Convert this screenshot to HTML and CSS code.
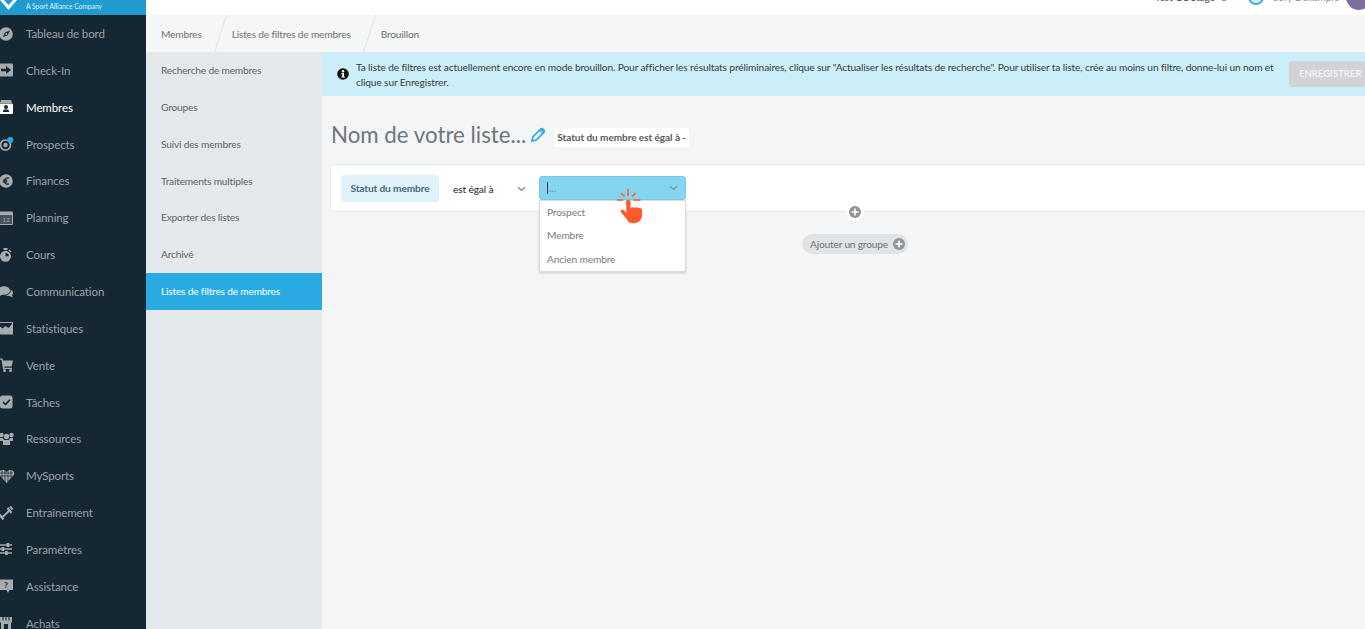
FILE: index.html
```html
<!DOCTYPE html>
<html lang="fr">
<head>
<meta charset="utf-8">
<title>Brouillon</title>
<link rel="stylesheet" href="styles.css">
</head>
<body>
<div class="app">
  <aside class="sidebar">
    <div class="logo">
      <svg class="logo-mark" viewBox="0 0 17 11" width="17" height="11"><path d="M0 0 L8.500 10 L17 0 L13 0 L8.500 5 L4 0 Z" fill="#fff"/></svg>
      <span class="logo-text">A Sport Alliance Company</span>
    </div>
    <nav class="nav">
      <a class="nav-item"><svg class="ico" viewBox="0 0 13 14"><circle cx="6" cy="7" r="6.800" fill="#a5abaf"/><path d="M10 3.500L7.500 8.500 3 10l2-4.500z" fill="#152732"/><circle cx="6.300" cy="7" r="1" fill="#a5abaf"/></svg><span>Tableau de bord</span></a>
      <a class="nav-item"><svg class="ico" viewBox="0 0 13 14"><rect x="-1" y="0.500" width="14" height="13" rx="1" fill="#a5abaf"/><path d="M1 5.800h5V3l5 4-5 4V8.200H1z" fill="#152732"/></svg><span>Check-In</span></a>
      <a class="nav-item active"><svg class="ico" viewBox="0 0 13 14"><path d="M1 0h10l1 3H0z" fill="#a5abaf"/><rect x="-1" y="3.500" width="14" height="10.500" rx="1" fill="#fff"/><circle cx="6" cy="7" r="2" fill="#152732"/><path d="M2.800 12c0-2.200 1.500-2.800 3.200-2.800S9.200 9.800 9.200 12z" fill="#152732"/></svg><span>Membres</span></a>
      <a class="nav-item"><svg class="ico" viewBox="0 0 13 14"><circle cx="5.500" cy="8" r="5" fill="none" stroke="#a5abaf" stroke-width="1.700"/><circle cx="5.500" cy="8" r="2.200" fill="#a5abaf"/><circle cx="10.300" cy="3" r="3" fill="#29abe2"/></svg><span>Prospects</span></a>
      <a class="nav-item"><svg class="ico" viewBox="0 0 13 14"><circle cx="6" cy="7" r="6.800" fill="#a5abaf"/><path d="M9 4.300C6.700 3 4.500 4.500 4.500 7s2.200 4 4.500 2.700M2.800 6.200h4.500M2.800 7.900h4.500" fill="none" stroke="#152732" stroke-width="1.200"/></svg><span>Finances</span></a>
      <a class="nav-item"><svg class="ico" viewBox="0 0 13 14"><rect x="-1" y="0.500" width="14" height="13.500" rx="1" fill="#a5abaf"/><rect x="0" y="4" width="12" height="9" fill="#46535b"/><text x="6" y="11" class="ico-num">12</text></svg><span>Planning</span></a>
      <a class="nav-item"><svg class="ico" viewBox="0 0 13 14"><circle cx="5.500" cy="8.300" r="5.500" fill="#a5abaf"/><rect x="3.500" y="0" width="4" height="2" fill="#a5abaf"/><path d="M9.500 1.500l2 2-1 1-2-2z" fill="#a5abaf"/><path d="M5.500 8.300V5A3.300 3.300 0 0 1 8.800 8.300z" fill="#152732"/></svg><span>Cours</span></a>
      <a class="nav-item"><svg class="ico" viewBox="0 0 13 14"><ellipse cx="4" cy="5.500" rx="6" ry="4.300" fill="#a5abaf"/><path d="M0 8l-1 3.500L3.500 9z" fill="#a5abaf"/><path d="M10.500 4.500c1.500.8 2.500 2 2.500 3.500 0 1-.5 1.800-1 2.300l1 2.200-3.500-1.500c-1.500.2-3-.2-4-1 3 0 6-2 5-5.500z" fill="#a5abaf"/></svg><span>Communication</span></a>
      <a class="nav-item"><svg class="ico" viewBox="0 0 13 14"><rect x="-1" y="1" width="14" height="12.500" fill="#a5abaf"/><path d="M0 2h12v1L8.500 7 5.500 5 2.500 7.500 0 5.500z" fill="#152732"/></svg><span>Statistiques</span></a>
      <a class="nav-item"><svg class="ico" viewBox="0 0 13 14"><path d="M-1 .5h3.500l.5 2H13L11.500 8.500H4.200l.3 1.200H12v1.300H3L1.500 1.800H-1z" fill="#a5abaf"/><circle cx="4.500" cy="12.500" r="1.500" fill="#a5abaf"/><circle cx="10.500" cy="12.500" r="1.500" fill="#a5abaf"/></svg><span>Vente</span></a>
      <a class="nav-item"><svg class="ico" viewBox="0 0 13 14"><rect x="0" y="0.500" width="12.500" height="13" rx="2.500" fill="#a5abaf"/><path d="M3 7l2.500 2.500L9.800 4.800" fill="none" stroke="#152732" stroke-width="1.700"/></svg><span>Tâches</span></a>
      <a class="nav-item"><svg class="ico" viewBox="0 0 13 14"><circle cx="6.500" cy="4.500" r="2.700" fill="#a5abaf"/><circle cx="1.500" cy="3" r="2.200" fill="#a5abaf"/><circle cx="11.500" cy="3" r="2.200" fill="#a5abaf"/><path d="M-1 6h4l1 2h5l1-2h3v3H10v4H3V9H-1z" fill="#a5abaf"/></svg><span>Ressources</span></a>
      <a class="nav-item"><svg class="ico" viewBox="0 0 13 14"><path d="M-1 3l2-2h3l2.500 2L9 1h3l2 2v3l-3 3-4.500 5L2 9-1 6z" fill="#a5abaf"/><path d="M-1 4h14M-1 7h14M2 1v10M5 1v12M8 1v12M11 1v10" stroke="#152732" stroke-width=".7"/></svg><span>MySports</span></a>
      <a class="nav-item"><svg class="ico" viewBox="0 0 13 14"><path d="M2 11.500L10 4" stroke="#a5abaf" stroke-width="1.800"/><path d="M7.500 2l4 5M10 .5l2.500 3M-.5 8.500l4 5" stroke="#a5abaf" stroke-width="2.200"/></svg><span>Entraînement</span></a>
      <a class="nav-item"><svg class="ico" viewBox="0 0 13 14"><path d="M-1 3h13M-1 7h13M-1 11h13" stroke="#a5abaf" stroke-width="1.300"/><rect x="6.500" y="1" width="2.800" height="4" fill="#a5abaf"/><rect x="1.500" y="5" width="2.800" height="4" fill="#a5abaf"/><rect x="5" y="9" width="2.800" height="4" fill="#a5abaf"/></svg><span>Paramètres</span></a>
      <a class="nav-item"><svg class="ico" viewBox="0 0 13 14"><path d="M-1 .5h14v10.500H9.500L8 14l-1.500-3H-1z" fill="#a5abaf"/><text x="6" y="8.500" class="ico-q">?</text></svg><span>Assistance</span></a>
      <a class="nav-item"><svg class="ico" viewBox="0 0 13 14"><path d="M0 1h12v5.500h-1V14H1V6.500H0z" fill="#a5abaf"/><path d="M3 1v3.500M6 1v3.500M9 1v3.500" stroke="#152732"/><rect x="4" y="8" width="4" height="6" fill="#152732"/></svg><span>Achats</span></a>
    </nav>
  </aside>

  <div class="main">
    <header class="topbar">
      <div class="topbar-inner">
        <span class="studio">Test OL Stage</span>
        <span class="caret"></span>
        <span class="ring"></span>
        <span class="user">Sofy Dexample</span>
        <span class="avatar"></span>
      </div>
    </header>

    <div class="crumbs">
      <span class="crumb">Membres</span>
      <span class="crumb">Listes de filtres de membres</span>
      <span class="crumb last">Brouillon</span>
    </div>

    <div class="body">
      <nav class="subnav">
        <a class="sub-item">Recherche de membres</a>
        <a class="sub-item">Groupes</a>
        <a class="sub-item">Suivi des membres</a>
        <a class="sub-item">Traitements multiples</a>
        <a class="sub-item">Exporter des listes</a>
        <a class="sub-item">Archivé</a>
        <a class="sub-item current">Listes de filtres de membres</a>
      </nav>

      <section class="content">
        <div class="notice">
          <svg class="info" viewBox="0 0 12 12" width="12" height="12"><circle cx="6" cy="6" r="5.800" fill="#111"/><circle cx="6" cy="3.200" r="1.200" fill="#fff"/><path d="M4.400 5h2.600v3.600h.8v1H4.400v-1h.9V6h-.9z" fill="#fff"/></svg>
          <p class="notice-text">Ta liste de filtres est actuellement encore en mode brouillon. Pour afficher les résultats préliminaires, clique sur "Actualiser les résultats de recherche". Pour utiliser ta liste, crée au moins un filtre, donne-lui un nom et clique sur Enregistrer.</p>
          <span class="save">ENREGISTRER</span>
        </div>

        <div class="title-row">
          <h1 class="title">Nom de votre liste...</h1>
          <svg class="pencil" viewBox="0 0 16 16" width="15" height="15"><path d="M1 15l1-4.500L10.500 2l3.500 3.500L5.500 14z" fill="none" stroke="#2aa5dc" stroke-width="1.700"/><path d="M11 1.500l1-1 3.500 3.500-1 1z" fill="#2aa5dc"/><path d="M9 3.500L12.500 7" stroke="#2aa5dc" stroke-width="1.200"/></svg>
          <span class="summary">Statut du membre est égal à -</span>
        </div>

        <div class="filter-card">
          <span class="field">Statut du membre</span>
          <span class="operator">est égal à<svg class="chev" viewBox="0 0 10 6" width="9" height="6"><path d="M1 1l4 3.500L9 1" fill="none" stroke="#8c9296" stroke-width="1.500"/></svg></span>
          <div class="select-wrap">
            <div class="select"><span class="cursor"></span><span class="dots">...</span><svg class="chev" viewBox="0 0 10 6" width="9" height="6"><path d="M1 1l4 3.500L9 1" fill="none" stroke="#7f9aa8" stroke-width="1.500"/></svg></div>
            <ul class="menu">
              <li>Prospect</li>
              <li>Membre</li>
              <li>Ancien membre</li>
            </ul>
            <svg class="hand" viewBox="0 0 28 35" width="28" height="35">
              <path d="M11 0v7M4 4l3.500 3.500M18.500 4L15 7.500M0 11h6M16.500 11h7" stroke="#ff5a2b" stroke-width="1.500" fill="none"/>
              <path d="M9 13c0-3 4.500-3 4.500 0v6c1-1 3-1 4 0 1-1 3-1 4 .3 1.500-.7 3.500 0 3.500 2v5c0 4-3 8-8 8s-6-2-8-5l-5-6c-1.500-2 1-3.500 3-2l2.500 2.500z" fill="#ff5a2b"/>
            </svg>
          </div>
        </div>

        <div class="add-col">
          <span class="plus-ring"><svg class="plus" viewBox="0 0 12 12" width="12" height="12"><circle cx="6" cy="6" r="6" fill="#8f9599"/><path d="M6 2.500v7M2.500 6h7" stroke="#fff" stroke-width="1.600"/></svg></span>
          <span class="add-group">Ajouter un groupe<svg class="plus" viewBox="0 0 12 12" width="12" height="12"><circle cx="6" cy="6" r="6" fill="#8f9599"/><path d="M6 2.500v7M2.500 6h7" stroke="#fff" stroke-width="1.600"/></svg></span>
        </div>
      </section>
    </div>
  </div>
</div>
</body>
</html>
```

FILE: styles.css
```css
* { box-sizing: border-box; }
html, body { margin: 0; height: 100%; overflow: hidden; }
body { font-family: "Lato", "Noto Sans", sans-serif; font-size: 10px; color: #5f6468; background: #f3f5f6; }
.app { display: flex; width: 1365px; height: 629px; overflow: hidden; }

.sidebar { width: 146px; flex: none; background: #152732; }
.logo { height: 15px; background: #209bcf; display: flex; align-items: flex-start; overflow: hidden; }
.logo-mark { flex: none; }
.logo-text { color: #dff2fb; font-size: 6.700px; line-height: 13px; margin-left: 9px; white-space: nowrap; }
.nav { display: flex; flex-direction: column; padding-top: 0.200px; }
.nav-item { height: 36.850px; flex: none; display: flex; align-items: center; color: #9aa2a6; font-size: 11.500px; letter-spacing: -0.100px; gap: 13px; white-space: nowrap; }
.nav-item.active { color: #fff; }
.ico { width: 13px; height: 14px; flex: none; overflow: visible; }
.ico-q { font-size: 8px; fill: #152732; text-anchor: middle; font-family: "Liberation Serif", serif; font-weight: bold; }
.ico-num { font-size: 6.500px; fill: #a5abaf; text-anchor: middle; font-family: "Lato", sans-serif; letter-spacing: 0; }

.main { flex: 1; min-width: 0; display: flex; flex-direction: column; }
.topbar { height: 15px; background: #fff; overflow: hidden; flex: none; }
.topbar-inner { height: 15px; display: flex; align-items: flex-end; justify-content: flex-end; margin-right: -7px; }
.studio { font-size: 10px; color: #44494c; line-height: 12px; margin-bottom: 12px; white-space: nowrap; }
.caret { width: 4px; height: 2px; border-top: 1px solid #5fb57b; margin: 0 22px 13px 7px; }
.ring { width: 16px; height: 16px; border-radius: 50%; border: 2px solid #3aaee0; background: #e8ecee; margin-bottom: 10px; flex: none; }
.user { font-size: 10px; color: #8d9295; line-height: 12px; margin: 0 7px 12px 9px; white-space: nowrap; }
.avatar { width: 26px; height: 26px; border-radius: 50%; background: #7d6ea1; margin-bottom: 5px; flex: none; }

.crumbs { height: 37px; background: #f5f6f6; display: flex; align-items: flex-start; flex: none; font-size: 10.200px; letter-spacing: -0.200px; color: #6d7274; padding-left: 15px; }
.crumb { position: relative; height: 37px; line-height: 38px; padding-right: 30px; white-space: nowrap; }
.crumb:not(.last)::after { content: ""; position: absolute; right: 11px; top: -1px; width: 1px; height: 39px; background: #dfe3e5; transform: rotate(18deg); }

.body { flex: 1; display: flex; min-height: 0; }
.subnav { width: 176px; flex: none; background: #e4e8ea; display: flex; flex-direction: column; }
.sub-item { height: 36.850px; flex: none; line-height: 37px; padding-left: 15px; font-size: 10.200px; letter-spacing: -0.200px; color: #5f6468; white-space: nowrap; }
.sub-item.current { background: #29abe2; color: #fff; }

.content { flex: 1; min-width: 0; background: #f3f5f6; }
.notice { height: 44px; background: #cceef8; display: flex; align-items: center; padding-left: 15px; color: #333; }
.info { flex: none; }
.notice-text { margin: 1px 0 0 7px; width: 925px; flex: none; font-size: 10.200px; letter-spacing: -0.140px; line-height: 15px; color: #3a3d3f; }
.save { margin-left: 8px; flex: none; width: 76px; height: 26px; border-radius: 3px; background: #d1d3d6; color: #f1f2f3; font-size: 9.500px; font-weight: 700; letter-spacing: 0; line-height: 26px; padding-left: 10px; white-space: nowrap; }

.title-row { display: flex; align-items: center; height: 26px; margin: 26px 0 0 9px; }
.title { margin: 0 0 2px; font-size: 22.300px; font-weight: 400; color: #70767a; white-space: nowrap; }
.pencil { margin-left: 5px; margin-top: -2px; flex: none; }
.summary { margin-left: 8px; background: #fff; border-radius: 3px; padding: 0 3px; height: 19px; line-height: 19px; font-size: 10px; font-weight: 700; letter-spacing: -0.050px; color: #55595c; white-space: nowrap; margin-top: 5px; }

.filter-card { margin: 16px 0 0 8px; height: 48px; width: 1050px; background: #fff; border: 1px solid #e6e9eb; border-radius: 3px; display: flex; align-items: flex-start; padding: 10px 0 0 10px; }
.field { height: 27px; line-height: 27px; width: 98px; text-align: center; background: #e0f3fb; border-radius: 3px; font-size: 10.200px; letter-spacing: -0.150px; font-weight: 700; color: #47697c; flex: none; }
.operator { width: 100px; height: 27px; display: flex; align-items: center; justify-content: space-between; padding: 0 13px 0 14px; color: #222; font-size: 10.200px; letter-spacing: -0.150px; flex: none; }
.select-wrap { position: relative; width: 147px; flex: none; margin-top: 1px; }
.select { height: 24px; background: #85d4f0; border: 1px solid #7cc8e6; border-radius: 3px; display: flex; align-items: center; padding: 0 7px 0 7px; }
.cursor { width: 1px; height: 12px; background: #334; }
.dots { flex: 1; color: #6b8a99; margin-left: 1px; }
.menu { position: absolute; left: 0; top: 24px; width: 147px; margin: 0; padding: 0; list-style: none; background: #fff; border: 1px solid #d9dcde; box-shadow: 0 1px 2px rgba(0,0,0,.18); z-index: 2; height: 72px; }
.menu li { height: 23.400px; line-height: 23.400px; padding-left: 7px; font-size: 10.200px; letter-spacing: -0.150px; color: #767b7f; }
.hand { position: absolute; left: 78px; top: 13px; z-index: 3; }

.add-col { width: 1050px; margin-left: 8px; display: flex; flex-direction: column; align-items: center; }
.plus-ring { margin-top: -9px; width: 18px; height: 18px; border-radius: 50%; background: #fff; display: flex; align-items: center; justify-content: center; z-index: 1; }
.plus { flex: none; display: block; }
.add-group { margin-top: 13px; height: 20px; border-radius: 10px; background: #e0e4e6; display: flex; align-items: center; gap: 5px; padding: 0 3px 0 8px; font-size: 10.200px; letter-spacing: -0.200px; color: #6d7275; white-space: nowrap; }
```
